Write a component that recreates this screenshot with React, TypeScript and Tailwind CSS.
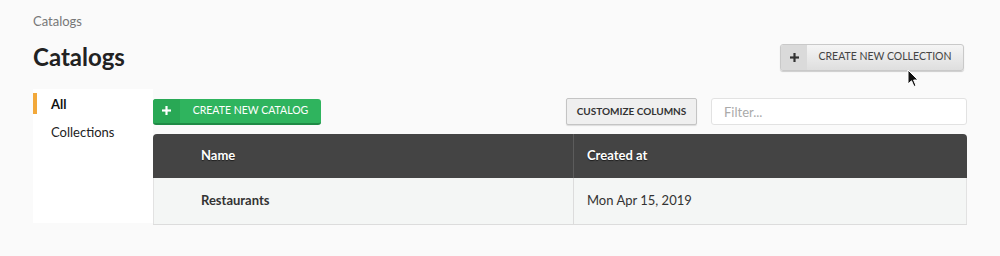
import React from "react";

const font = "font-['Lato','Open_Sans',sans-serif]";

function Plus({ className }: { className?: string }) {
  return (
    <svg viewBox="0 0 10 10" className={className} fill="currentColor">
      <rect x="3.8" y="0" width="2.4" height="10" />
      <rect x="0" y="3.8" width="10" height="2.4" />
    </svg>
  );
}

function Cursor() {
  return (
    <svg
      viewBox="0 0 12 19"
      className="absolute left-[907px] top-[69px] h-[19px] w-[12px]"
    >
      <path
        d="M1 1 L1 15 L4.5 11.8 L7 17.5 L9 16.6 L6.6 11 L11 11 Z"
        fill="#111"
        stroke="#fff"
        strokeWidth="1"
        strokeLinejoin="round"
      />
    </svg>
  );
}

const sideNav = [
  { label: "All", active: true },
  { label: "Collections", active: false },
];

const rows = [{ name: "Restaurants", created: "Mon Apr 15, 2019" }];

export default function App() {
  return (
    <div
      className={`relative h-[256px] w-[1000px] overflow-hidden bg-[#fafafa] pl-[33px] pr-[33px] text-[#333] ${font}`}
    >
      <div className="pt-[13px] text-[13px] leading-[16px] text-[#777]">
        Catalogs
      </div>

      <div className="mt-[12px] flex items-center justify-between pr-[3px]">
        <h1 className="text-[24px] font-bold leading-[32px] text-[#222]">
          Catalogs
        </h1>
        <button className="flex h-[27px] w-[184px] items-stretch overflow-hidden rounded-[3px] border border-[#c9c9c9] bg-gradient-to-b from-[#f5f5f5] to-[#dedede] shadow-[0_1px_1px_rgba(0,0,0,0.18)]">
          <span className="flex w-[26px] items-center justify-center bg-[#dadada] text-[#333]">
            <Plus className="h-[9px] w-[9px]" />
          </span>
          <span className="flex flex-1 items-center justify-center text-[10.5px] text-[#444]">
            CREATE NEW COLLECTION
          </span>
        </button>
      </div>

      <div className="mt-[16px] flex">
        <nav className="h-[134px] w-[120px] bg-white pt-[4px]">
          {sideNav.map((item) => (
            <div
              key={item.label}
              className={`flex items-center border-l-[4px] pl-[14px] text-[13px] ${
                item.active
                  ? "h-[21px] border-[#f2a83a] pt-[2px] font-bold text-[#111]"
                  : "mt-[9px] h-[20px] border-transparent text-[#222]"
              }`}
            >
              {item.label}
            </div>
          ))}
        </nav>

        <div className="flex-1 pt-[9px]">
          <div className="flex h-[27px] items-center">
            <button className="flex h-[26px] w-[168px] items-stretch overflow-hidden rounded-[3px] border-b-2 border-[#1f8a45] bg-[#2fb45e] text-white">
              <span className="flex w-[27px] items-center justify-center bg-[#29a855]">
                <Plus className="h-[9px] w-[9px]" />
              </span>
              <span className="flex flex-1 items-center justify-center text-[10.5px]">
                CREATE NEW CATALOG
              </span>
            </button>
            <div className="flex-1" />
            <button className="h-[27px] w-[131px] rounded-[2px] border border-[#c4c4c4] bg-[#efefef] text-[10px] font-bold text-[#333] shadow-[0_1px_1px_rgba(0,0,0,0.12)]">
              CUSTOMIZE COLUMNS
            </button>
            <input
              className="ml-[14px] h-[27px] w-[256px] rounded-[3px] border border-[#e2e2e2] bg-white pl-[12px] text-[13px] outline-none placeholder:text-[#aaa]"
              placeholder="Filter..."
            />
          </div>

          <div className="mt-[9px] overflow-hidden rounded-t-[4px] border-b border-[#dcdcdc]">
            <div className="flex h-[44px] bg-[#444] text-[13px] font-bold text-white [text-shadow:0_1px_1px_rgba(0,0,0,0.6)]">
              <div className="flex w-[421px] items-center border-r border-[#5c5c5c] pl-[48px]">
                Name
              </div>
              <div className="flex flex-1 items-center pl-[13px]">
                Created at
              </div>
            </div>
            {rows.map((row) => (
              <div
                key={row.name}
                className="flex h-[46px] border-x border-[#e2e2e2] bg-[#f4f6f5] text-[13px]"
              >
                <div className="flex w-[420px] items-center border-r border-[#dcdcdc] pl-[47px] font-bold text-[#333]">
                  {row.name}
                </div>
                <div className="flex flex-1 items-center pl-[13px] text-[#333]">
                  {row.created}
                </div>
              </div>
            ))}
          </div>
        </div>
      </div>

      <Cursor />
    </div>
  );
}
